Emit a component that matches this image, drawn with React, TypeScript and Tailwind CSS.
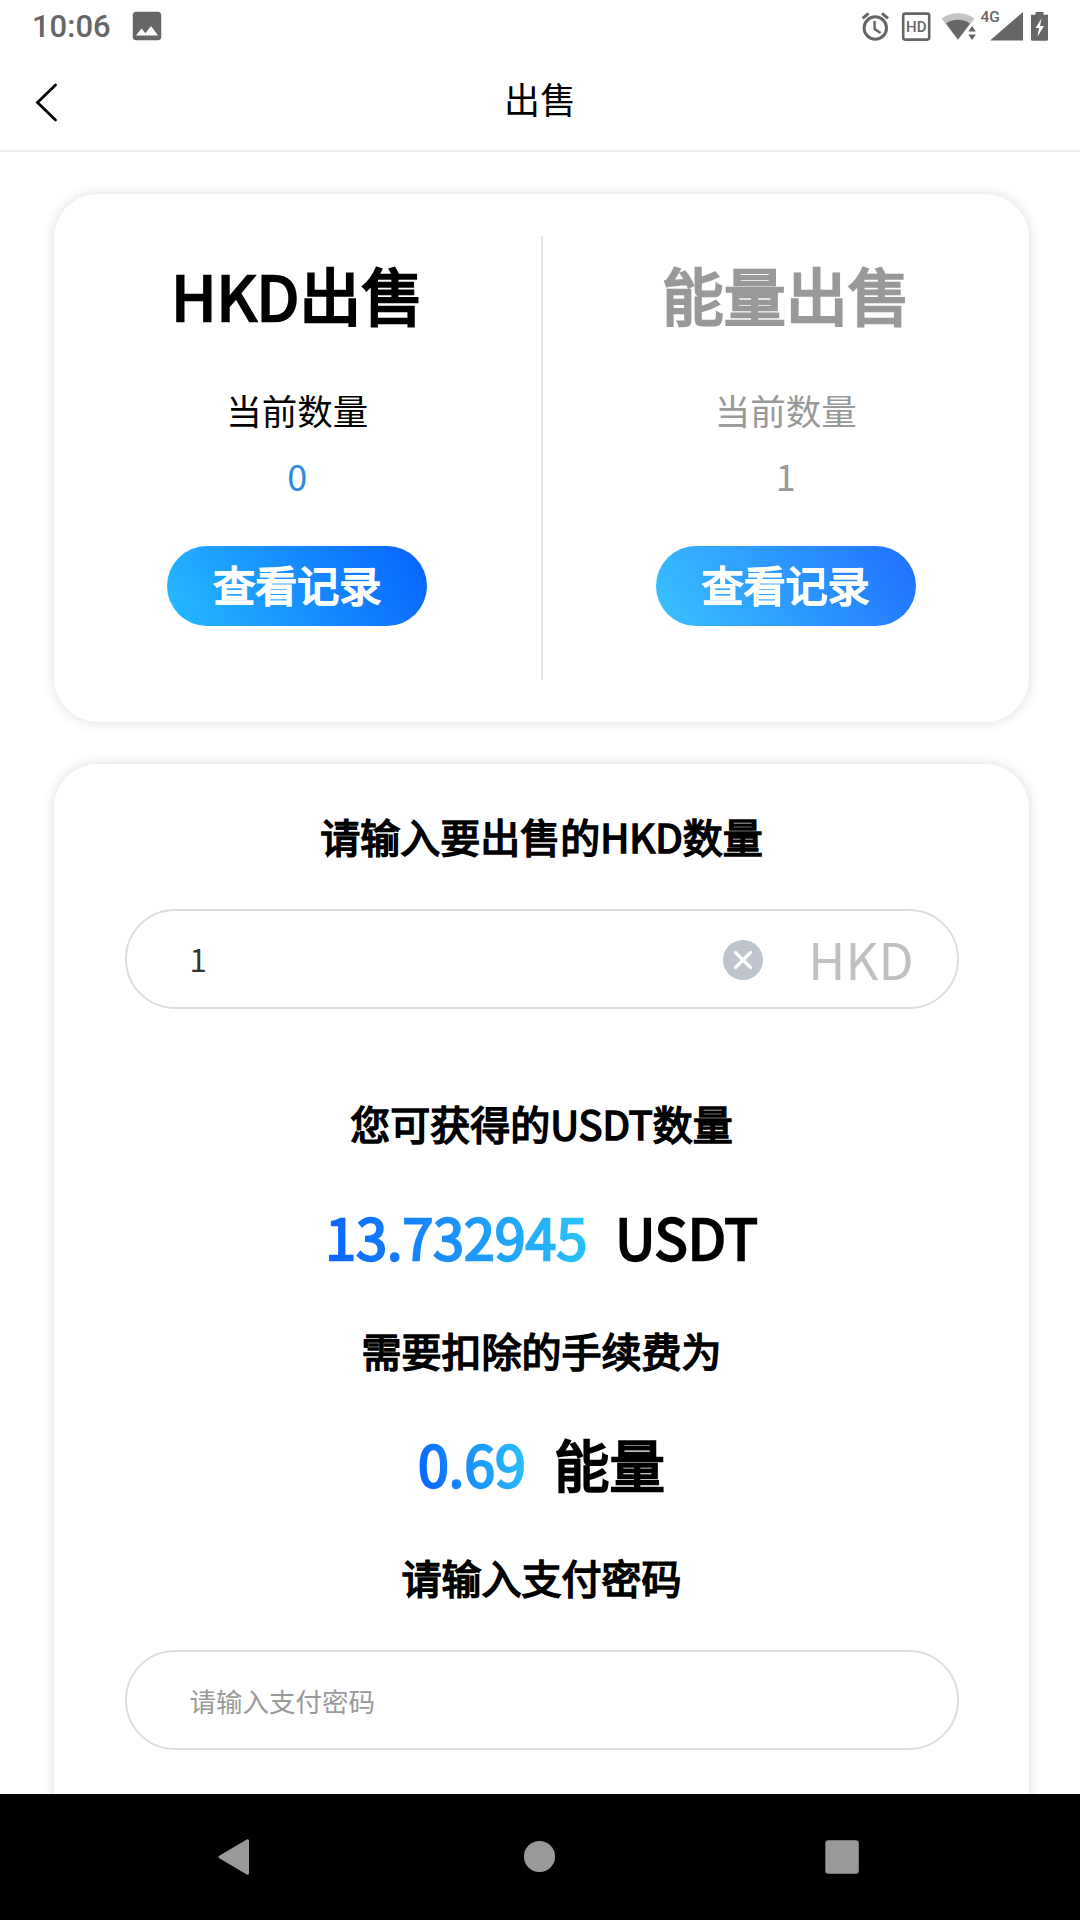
import React from 'react'
import { clsx } from 'clsx'
import { MdImage } from 'react-icons/md'

interface SellOption {
  title: string
  amount: string
  active: boolean
}

const options: SellOption[] = [
  { title: 'HKD出售', amount: '0', active: true },
  { title: '能量出售', amount: '1', active: false },
]

const StatusBar: React.FC = () => (
  <div className="flex h-[52px] items-start justify-between pl-8 pr-8 pt-3 text-[#666]">
    <div className="flex items-start">
      <span className="w-[96px] font-['Roboto'] text-[31px] font-medium leading-[30px]">10:06</span>
      <MdImage className="-mt-[5px] h-[38px] w-[38px]" />
    </div>
    <svg width="188" height="38" viewBox="0 -6 188 38" className="-mt-[8px]" fill="#666">
      {/* Alarm */}
      <g fill="none" stroke="#666" strokeWidth="3">
        <circle cx="15.3" cy="18" r="11.2" />
        <path d="M14.6 11v8l6 4" strokeWidth="2.4" />
        <path d="M2.6 8.4l6-5M28 8.4l-6-5" />
      </g>
      {/* HD */}
      <rect x="43.2" y="3.6" width="26" height="26" rx="2" fill="none" stroke="#666" strokeWidth="2.6" />
      <text x="56.3" y="22.2" fontFamily="Roboto" fontSize="15" fontWeight="500" textAnchor="middle">
        HD
      </text>
      {/* Wifi */}
      <path d="M81.5 8.5C91 1.5 105 1.5 114.5 8.5L98 30z" fill="#c4c4c4" />
      <path d="M86 13.5C93 8.5 103 8.5 110 13.5L98 29.5z" />
      <path d="M106 20h12v11h-12z" fill="#fff" />
      <path d="M108.3 21.5h7.6l-3.8-5.5zM108.3 24.5h7.6l-3.8 5.5z" />
      {/* Signal */}
      <text x="120.5" y="12.2" fontFamily="Roboto" fontSize="15.5" fontWeight="500">
        4G
      </text>
      <path d="M163 2v28.6h-33z" />
      {/* Battery */}
      <path d="M175.5 2h8v2.7h4.5v24.6a1.5 1.5 0 0 1-1.5 1.5h-14a1.5 1.5 0 0 1-1.5-1.5V4.7h4.5z" />
      <path d="M181.500 8.500l-6 9.500h3.600l-1.600 8.500 6.500-10.500h-4z" fill="#fff" />
    </svg>
  </div>
)

const Header: React.FC = () => (
  <header className="relative flex h-[100px] items-center justify-center border-b-2 border-[#ebebeb]">
    <button className="absolute left-[33px] top-[29px]" aria-label="返回">
      <svg width="26" height="42" viewBox="0 0 26 42" fill="none" stroke="#000" strokeWidth="2.8" strokeLinecap="round">
        <path d="M22.5 4L4.5 21.5L22.5 39" />
      </svg>
    </button>
    <h1 className="-mt-[7px] text-[36px] leading-[36px]">出售</h1>
  </header>
)

const SellColumn: React.FC<{ option: SellOption }> = ({ option }) => (
  <div className={clsx('flex flex-1 flex-col items-center pt-[27px]', !option.active && 'text-[#999]')}>
    <h2 className="text-[62px] leading-[62px] [-webkit-text-stroke:2.6px]">{option.title}</h2>
    <p className="mt-[67px] text-[35.5px] leading-[36px]">当前数量</p>
    <p className={clsx('mt-[29px] text-[36px] leading-[36px]', option.active && 'text-[#2b8ae0]')}>{option.amount}</p>
    <button
      className={clsx(
        'mt-[53px] h-[80px] w-[260px] rounded-full bg-[linear-gradient(60deg,#26bbff,#0862ff)] pb-[5px] text-[42px] leading-[75px] text-white [-webkit-text-stroke:1.9px]',
        !option.active && 'opacity-90',
      )}
    >
      查看记录
    </button>
  </div>
)

const Label: React.FC<{ className?: string; children: React.ReactNode }> = ({ className, children }) => (
  <h3 className={clsx('text-[40px] leading-[40px] [-webkit-text-stroke:1.7px]', className)}>{children}</h3>
)

const Amount: React.FC<{ value: string; unit: string }> = ({ value, unit }) => (
  <p className="mt-[65px] flex gap-7 text-[55.5px] leading-[56px] [-webkit-text-stroke:2.3px]">
    <span className="-my-2 bg-[linear-gradient(80deg,#0a62ff,#2cc4f8)] bg-clip-text py-2 text-transparent">{value}</span>
    <span>{unit}</span>
  </p>
)

export default function App() {
  return (
    <div
      lang="zh-CN"
      className="flex h-[1920px] w-[1080px] flex-col overflow-hidden bg-white font-['Noto_Sans_CJK_SC',sans-serif] text-black"
    >
      <StatusBar />
      <Header />

      <main className="min-h-0 flex-1 overflow-hidden pl-[54px] pr-[51px] pt-[42px]">
        <section className="flex h-[528px] rounded-[44px] py-[42px] shadow-[0_0_14px_rgba(0,0,0,0.14)]">
          <SellColumn option={options[0]} />
          <div className="w-[2px] bg-[#e5e5e5]" />
          <SellColumn option={options[1]} />
        </section>

        <section className="mt-[42px] flex h-[1200px] flex-col items-center rounded-[44px] pt-[52px] shadow-[0_0_14px_rgba(0,0,0,0.14)]">
          <Label>请输入要出售的HKD数量</Label>
          <div className="mt-[53px] flex h-[100px] w-[834px] items-center rounded-full border-2 border-[#ddd] pl-[63px] pr-[43px]">
            <span className="flex-1 text-[31px] leading-[36px] text-[#333]">1</span>
            <svg width="40" height="40" viewBox="0 0 40 40" className="mr-[45px] mt-[2px]">
              <circle cx="20" cy="20" r="20" fill="#c0c4cc" />
              <path d="M12.5 12.5l15 15M27.5 12.5l-15 15" stroke="#fff" strokeWidth="3.2" strokeLinecap="round" />
            </svg>
            <span className="-mt-[2px] text-[51px] leading-[52px] text-[#c0c0c0]">HKD</span>
          </div>

          <Label className="mt-[94px]">您可获得的USDT数量</Label>
          <Amount value="13.732945" unit="USDT" />

          <Label className="mt-[66px]">需要扣除的手续费为</Label>
          <Amount value="0.69" unit="能量" />

          <Label className="mt-[66px]">请输入支付密码</Label>
          <input
            type="password"
            placeholder="请输入支付密码"
            className="mt-[53px] h-[100px] w-[834px] shrink-0 rounded-full border-2 border-[#ddd] px-[63px] text-[26.5px] placeholder:text-[#999]"
          />
        </section>
      </main>

      {/* System navigation */}
      <nav className="h-[126px] bg-black">
        <svg width="1080" height="126" viewBox="0 0 1080 126" fill="#999">
          <path d="M220 63L247.5 46.8V79.2z" stroke="#999" strokeWidth="3" strokeLinejoin="round" />
          <circle cx="539.5" cy="62.5" r="15.6" />
          <rect x="825.3" y="46.3" width="33.5" height="33.5" rx="3" />
        </svg>
      </nav>
    </div>
  )
}
